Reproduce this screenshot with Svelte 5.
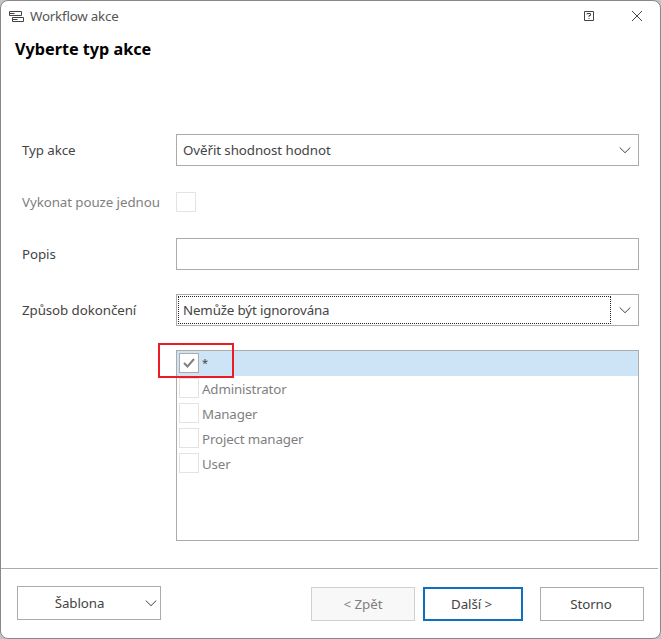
<script lang="ts">
	let actionType = $state("Ověřit shodnost hodnot");
	let description = $state("");
	let completion = $state("Nemůže být ignorována");

	let roles = $state([
		{ name: "*", checked: true },
		{ name: "Administrator", checked: false },
		{ name: "Manager", checked: false },
		{ name: "Project manager", checked: false },
		{ name: "User", checked: false },
	]);
</script>

{#snippet chevron()}
	<svg class="chevron" width="12" height="8" viewBox="0 0 12 8">
		<path d="M0.7 1.5 L6 6.7 L11.3 1.5" />
	</svg>
{/snippet}

<div class="dialog">
	<header class="titlebar">
		<svg class="app-icon" width="16" height="12" viewBox="0 0 16 12">
			<path d="M0.5 0.5h12v4h-12zM3.5 6.5h11v4h-11zM0.5 2.5h5M3.5 8.5h5" />
		</svg>
		<span class="window-title">Workflow akce</span>
		<button class="tool help" type="button" aria-label="Nápověda">
			<svg width="10" height="10" viewBox="0 0 10 10">
				<path d="M0.5 0.5h9v9h-9z" />
				<path d="M3 3.5V2.5h3.5v2H5V6M4.5 7.5h1" />
			</svg>
		</button>
		<button class="tool close" type="button" aria-label="Zavřít">
			<svg width="12" height="12" viewBox="0 0 12 12">
				<path d="M1 1L11 11M11 1L1 11" />
			</svg>
		</button>
	</header>

	<h1>Vyberte typ akce</h1>

	<div class="form">
		<div class="row">
			<span class="label">Typ akce</span>
			<div class="field"><span class="value">{actionType}</span>{@render chevron()}</div>
		</div>
		<div class="row once">
			<span class="label disabled">Vykonat pouze jednou</span>
			<span class="check"></span>
		</div>
		<div class="row">
			<span class="label">Popis</span>
			<input class="field" aria-label="Popis" bind:value={description} />
		</div>
		<div class="row completion">
			<span class="label">Způsob dokončení</span>
			<div class="field focused"><span class="value">{completion}</span>{@render chevron()}</div>
		</div>
		<div class="roles">
			{#each roles as role (role.name)}
				<div class="role" class:selected={role.checked}>
					<span class="check" class:checked={role.checked}>
						{#if role.checked}
							<svg width="12" height="10" viewBox="0 0 12 10"><path d="M1 5L4.5 8.5L11 1" /></svg>
						{/if}
					</span>
					<span class="role-name">{role.name}</span>
				</div>
			{/each}
			<div class="highlight"></div>
		</div>
	</div>

	<footer>
		<button class="btn template" type="button"><span>Šablona</span>{@render chevron()}</button>
		<button class="btn back" type="button" disabled>&lt; Zpět</button>
		<button class="btn next" type="button">Další &gt;</button>
		<button class="btn cancel" type="button">Storno</button>
	</footer>
</div>

<style>
	:global(body) {
		background: #c4c4c4;
		overflow: hidden;
	}

	.dialog {
		box-sizing: border-box;
		display: flex;
		flex-direction: column;
		width: 661px;
		height: 639px;
		border: 1px solid #888;
		border-radius: 8px;
		background: #fff;
		color: #444;
		font: 13.33px/18px "Noto Sans", sans-serif;
		letter-spacing: -0.08px;
	}

	svg {
		display: block;
		flex: none;
		fill: none;
		stroke: #444;
	}

	button {
		font: inherit;
		color: inherit;
		letter-spacing: inherit;
	}

	.titlebar {
		display: flex;
		align-items: center;
		height: 30px;
		padding: 0 17px 0 8px;
	}

	.app-icon {
		margin-top: 2px;
	}

	.window-title {
		flex: 1;
		margin-left: 5px;
		color: #555;
		letter-spacing: -0.2px;
	}

	.tool {
		padding: 0;
		border: 0;
		background: none;
	}

	.help {
		margin-right: 37px;
	}

	h1 {
		margin: 6px 0 0 14px;
		font-size: 16.2px;
		line-height: 24px;
		font-weight: 700;
		letter-spacing: 0;
		color: #000;
	}

	.form {
		flex: 1;
		padding: 73px 21px 0;
	}

	.row {
		display: flex;
		align-items: center;
		height: 32px;
	}

	.once {
		height: 20px;
		margin: 26px 0;
	}

	.completion {
		margin: 24px 0;
	}

	.label {
		width: 154px;
		flex: none;
	}

	.disabled {
		color: #7f7f7f;
	}

	.field {
		box-sizing: border-box;
		display: flex;
		align-items: center;
		width: 463px;
		height: 32px;
		padding: 0 7px 0 1px;
		border: 1px solid #ababab;
		background: #fff;
		font: inherit;
		outline: none;
	}

	.value {
		box-sizing: border-box;
		width: 433px;
		height: 28px;
		padding: 4px 4px;
		border: 1px solid transparent;
		margin-right: auto;
	}

	.focused .value {
		border: 1px dotted #222;
		letter-spacing: -0.15px;
	}

	.check {
		box-sizing: border-box;
		display: flex;
		align-items: center;
		justify-content: center;
		width: 20px;
		height: 20px;
		border: 1px solid #e3e3e3;
		background: #fff;
	}

	.checked {
		border-color: #ababab;
	}

	.check svg {
		stroke: #808080;
		stroke-width: 2;
	}

	.roles {
		position: relative;
		box-sizing: border-box;
		width: 463px;
		height: 191px;
		margin-left: 154px;
		border: 1px solid #ababab;
	}

	.role {
		display: flex;
		align-items: flex-start;
		gap: 3px;
		box-sizing: border-box;
		height: 25px;
		padding: 2px 0 0 2px;
		color: #7f7f7f;
		letter-spacing: -0.16px;
	}

	.role-name {
		margin-top: 2px;
	}

	.selected {
		background: #cde4f7;
		color: #444;
	}

	.selected .role-name {
		font-size: 11px;
		margin-top: 1px;
	}

	.highlight {
		position: absolute;
		left: -19px;
		top: -8px;
		box-sizing: border-box;
		width: 76px;
		height: 35px;
		border: 2px solid #ed1c24;
	}

	footer {
		display: flex;
		height: 70px;
		margin-right: 2px;
		padding: 18px 14px 0 16px;
		box-sizing: border-box;
		border-top: 1px solid #ababab;
	}

	.btn {
		box-sizing: border-box;
		width: 104px;
		height: 34px;
		padding: 0;
		border: 1px solid #ababab;
		background: #fff;
	}

	.template {
		display: flex;
		align-items: center;
		width: 144px;
		margin: -1px auto 0 0;
		padding: 0 3px 0 0;
	}

	.template span {
		flex: 1;
		padding-right: 4px;
	}

	.back {
		border-color: #d0d0d0;
		background: #f8f8f8;
		color: #7f7f7f;
	}

	.next {
		width: 100px;
		margin: 0 17px 0 8px;
		padding-right: 3px;
		border: 2px solid #106ebe;
	}

	.cancel {
		padding-right: 2px;
	}
</style>
